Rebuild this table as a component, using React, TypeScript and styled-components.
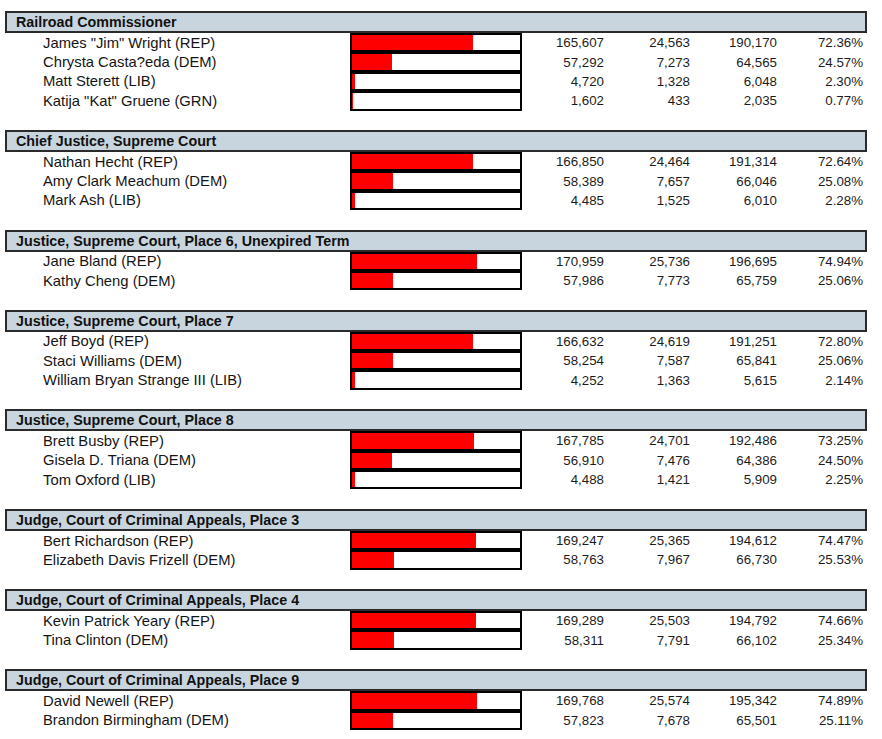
import React from "react";
import styled, { createGlobalStyle } from "styled-components";

const Global = createGlobalStyle`
  html, body { margin: 0; padding: 0; background: #fff; }
  body { font-family: Arial, "Liberation Sans", sans-serif; color: #111; }
`;

type Cand = { name: string; a: number; b: number; total: number; pct: number };
type Race = { title: string; cands: Cand[] };

const races: Race[] = [
  {
    title: "Railroad Commissioner",
    cands: [
      { name: 'James "Jim" Wright (REP)', a: 165607, b: 24563, total: 190170, pct: 72.36 },
      { name: "Chrysta Casta?eda (DEM)", a: 57292, b: 7273, total: 64565, pct: 24.57 },
      { name: "Matt Sterett (LIB)", a: 4720, b: 1328, total: 6048, pct: 2.3 },
      { name: 'Katija "Kat" Gruene (GRN)', a: 1602, b: 433, total: 2035, pct: 0.77 },
    ],
  },
  {
    title: "Chief Justice, Supreme Court",
    cands: [
      { name: "Nathan Hecht (REP)", a: 166850, b: 24464, total: 191314, pct: 72.64 },
      { name: "Amy Clark Meachum (DEM)", a: 58389, b: 7657, total: 66046, pct: 25.08 },
      { name: "Mark Ash (LIB)", a: 4485, b: 1525, total: 6010, pct: 2.28 },
    ],
  },
  {
    title: "Justice, Supreme Court, Place 6, Unexpired Term",
    cands: [
      { name: "Jane Bland (REP)", a: 170959, b: 25736, total: 196695, pct: 74.94 },
      { name: "Kathy Cheng (DEM)", a: 57986, b: 7773, total: 65759, pct: 25.06 },
    ],
  },
  {
    title: "Justice, Supreme Court, Place 7",
    cands: [
      { name: "Jeff Boyd (REP)", a: 166632, b: 24619, total: 191251, pct: 72.8 },
      { name: "Staci Williams (DEM)", a: 58254, b: 7587, total: 65841, pct: 25.06 },
      { name: "William Bryan Strange III (LIB)", a: 4252, b: 1363, total: 5615, pct: 2.14 },
    ],
  },
  {
    title: "Justice, Supreme Court, Place 8",
    cands: [
      { name: "Brett Busby (REP)", a: 167785, b: 24701, total: 192486, pct: 73.25 },
      { name: "Gisela D. Triana (DEM)", a: 56910, b: 7476, total: 64386, pct: 24.5 },
      { name: "Tom Oxford (LIB)", a: 4488, b: 1421, total: 5909, pct: 2.25 },
    ],
  },
  {
    title: "Judge, Court of Criminal Appeals, Place 3",
    cands: [
      { name: "Bert Richardson (REP)", a: 169247, b: 25365, total: 194612, pct: 74.47 },
      { name: "Elizabeth Davis Frizell (DEM)", a: 58763, b: 7967, total: 66730, pct: 25.53 },
    ],
  },
  {
    title: "Judge, Court of Criminal Appeals, Place 4",
    cands: [
      { name: "Kevin Patrick Yeary (REP)", a: 169289, b: 25503, total: 194792, pct: 74.66 },
      { name: "Tina Clinton (DEM)", a: 58311, b: 7791, total: 66102, pct: 25.34 },
    ],
  },
  {
    title: "Judge, Court of Criminal Appeals, Place 9",
    cands: [
      { name: "David Newell (REP)", a: 169768, b: 25574, total: 195342, pct: 74.89 },
      { name: "Brandon Birmingham (DEM)", a: 57823, b: 7678, total: 65501, pct: 25.11 },
    ],
  },
];

const ROW = 19.4;

const Page = styled.div`
  padding: 11px 0 0 5px;
  width: 862px;
  display: flex;
  flex-direction: column;
  gap: ${ROW}px;
`;

const Group = styled.section`
  display: flex;
  flex-direction: column;
`;

const Header = styled.div`
  box-sizing: border-box;
  height: 22px;
  border: 2px solid #2b2b2b;
  background: #c8d5de;
  padding-left: 9px;
  display: flex;
  align-items: center;
  font-weight: bold;
  font-size: 14.3px;
  color: #111;
`;

const Row = styled.div`
  display: grid;
  grid-template-columns: 345px 172px 82px 86px 87px 86px;
  height: ${ROW}px;
  align-items: center;
`;

const Name = styled.div`
  padding-left: 38px;
  font-size: 14.8px;
  white-space: nowrap;
  color: #151515;
`;

const Bar = styled.div`
  box-sizing: border-box;
  height: 100%;
  border: 2px solid #000;
  background: #fff;
  display: flex;
`;

const Fill = styled.div`
  height: 100%;
  background: #ff0000;
`;

const Num = styled.div`
  text-align: right;
  font-size: 13.3px;
  color: #1c1c1c;
`;

const fmt = (n: number) => n.toLocaleString("en-US");

export default function App() {
  return (
    <>
      <Global />
      <Page>
        {races.map((r) => (
          <Group key={r.title}>
            <Header>{r.title}</Header>
            {r.cands.map((c) => (
              <Row key={c.name}>
                <Name>{c.name}</Name>
                <Bar>
                  <Fill style={{ width: `max(0px, calc(${c.pct}% - 1px))` }} />
                </Bar>
                <Num>{fmt(c.a)}</Num>
                <Num>{fmt(c.b)}</Num>
                <Num>{fmt(c.total)}</Num>
                <Num>{c.pct.toFixed(2)}%</Num>
              </Row>
            ))}
          </Group>
        ))}
      </Page>
    </>
  );
}
